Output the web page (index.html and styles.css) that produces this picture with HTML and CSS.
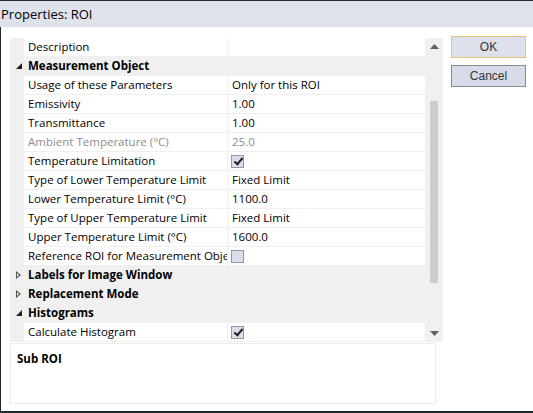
FILE: index.html
```html
<!DOCTYPE html>
<html>
<head>
<meta charset="utf-8">
<link rel="stylesheet" href="styles.css">
</head>
<body>
<div class="window">
  <div class="titlebar">Properties: ROI</div>
  <div class="content">
    <div class="main">
      <div class="grid">
        <div class="rows">
          <div class="row"><div class="gut"></div><div class="name">Description</div><div class="val"></div></div>
          <div class="row cat"><div class="gut"><span class="tri-open"></span></div><div class="cname">Measurement Object</div></div>
          <div class="row"><div class="gut"></div><div class="name">Usage of these Parameters</div><div class="val">Only for this ROI</div></div>
          <div class="row"><div class="gut"></div><div class="name">Emissivity</div><div class="val">1.00</div></div>
          <div class="row"><div class="gut"></div><div class="name">Transmittance</div><div class="val">1.00</div></div>
          <div class="row dis"><div class="gut"></div><div class="name">Ambient Temperature (°C)</div><div class="val">25.0</div></div>
          <div class="row"><div class="gut"></div><div class="name">Temperature Limitation</div><div class="val"><span class="chk on"></span></div></div>
          <div class="row"><div class="gut"></div><div class="name">Type of Lower Temperature Limit</div><div class="val">Fixed Limit</div></div>
          <div class="row"><div class="gut"></div><div class="name">Lower Temperature Limit (°C)</div><div class="val">1100.0</div></div>
          <div class="row"><div class="gut"></div><div class="name">Type of Upper Temperature Limit</div><div class="val">Fixed Limit</div></div>
          <div class="row"><div class="gut"></div><div class="name">Upper Temperature Limit (°C)</div><div class="val">1600.0</div></div>
          <div class="row"><div class="gut"></div><div class="name">Reference ROI for Measurement Object</div><div class="val"><span class="chk"></span></div></div>
          <div class="row cat"><div class="gut"><span class="tri-closed"></span></div><div class="cname">Labels for Image Window</div></div>
          <div class="row cat"><div class="gut"><span class="tri-closed"></span></div><div class="cname">Replacement Mode</div></div>
          <div class="row cat"><div class="gut"><span class="tri-open"></span></div><div class="cname">Histograms</div></div>
          <div class="row"><div class="gut"></div><div class="name">Calculate Histogram</div><div class="val"><span class="chk on"></span></div></div>
        </div>
        <div class="scroll">
          <svg class="arr" width="9" height="5" viewBox="0 0 9 5"><polygon points="0,5 4.5,0 9,5" fill="#606060"/></svg>
          <div class="track"><div class="thumb"></div></div>
          <svg class="arr" width="9" height="5" viewBox="0 0 9 5"><polygon points="0,0 4.5,5 9,0" fill="#606060"/></svg>
        </div>
      </div>
      <div class="desc"><div class="desc-title">Sub ROI</div></div>
    </div>
    <div class="buttons">
      <div class="btn default">OK</div>
      <div class="btn">Cancel</div>
    </div>
  </div>
</div>
</body>
</html>
```
FILE: styles.css
```css
* { box-sizing: border-box; }
html, body { margin: 0; padding: 0; background: #ffffff; }
body {
  font-family: "Open Sans", "Noto Sans", sans-serif;
  font-size: 11.5px;
  color: #000;
}
.window {
  width: 533px;
  height: 413px;
  border-top: 1px solid #1c2a2c;
  border-left: 1px solid #1c2a2c;
  border-bottom: 2px solid #1c2a2c;
  background: #fff;
  display: flex;
  flex-direction: column;
}
.titlebar {
  height: 26px;
  background: #dee2eb;
  padding-left: 1px;
  line-height: 26px;
  font-size: 13px;
  color: #000;
  margin-left: -1px;
}
.content {
  display: flex;
  padding: 11px 0 0 9px;
  flex: 1;
}
.main {
  width: 433px;
  display: flex;
  flex-direction: column;
}
.grid {
  display: flex;
  height: 304px;
}
.rows {
  width: 415px;
  display: flex;
  flex-direction: column;
}
.row {
  display: flex;
  height: 19px;
  line-height: 18px;
}
.gut {
  width: 14px;
  background: #f0f0f0;
  position: relative;
  flex-shrink: 0;
}
.name {
  width: 204px;
  padding-left: 4px;
  border-right: 1px solid #f0f0f0;
  border-bottom: 1px solid #f0f0f0;
  white-space: nowrap;
  overflow: hidden;
  flex-shrink: 0;
}
.val {
  flex: 1;
  padding-left: 4px;
  border-bottom: 1px solid #f0f0f0;
  white-space: nowrap;
  display: flex;
  align-items: center;
}
.dis { color: #8d8d8d; }
.cat { background: #f0f0f0; }
.cname {
  flex: 1;
  padding-left: 4px;
  font-weight: bold;
}
.tri-open {
  position: absolute;
  left: 6px;
  top: 6px;
  width: 0; height: 0;
  border-left: 6px solid transparent;
  border-bottom: 6px solid #1e1e1e;
}
.tri-closed {
  position: absolute;
  left: 6px;
  top: 5px;
  width: 6px; height: 8px;
}
.tri-closed::before {
  content: "";
  position: absolute;
  left: 0; top: 0;
  border-top: 4px solid transparent;
  border-bottom: 4px solid transparent;
  border-left: 5px solid #555;
}
.tri-closed::after {
  content: "";
  position: absolute;
  left: 1px; top: 2px;
  border-top: 2px solid transparent;
  border-bottom: 2px solid transparent;
  border-left: 2.5px solid #f0f0f0;
}
.chk {
  width: 13px;
  height: 13px;
  border: 1px solid #8f97a8;
  background: #dadeea;
  position: relative;
  display: inline-block;
  margin-left: -1px;
}
.chk.on::after {
  content: "";
  position: absolute;
  left: 3.5px;
  top: 0.5px;
  width: 3px;
  height: 7px;
  border-right: 2px solid #202020;
  border-bottom: 2px solid #202020;
  transform: rotate(40deg);
}
.scroll {
  width: 18px;
  background: #f0f0f0;
  display: flex;
  flex-direction: column;
  align-items: center;
}
.arr { margin: 6px 0; flex-shrink: 0; }
.track {
  flex: 1;
  width: 100%;
  display: flex;
  justify-content: center;
  padding-top: 46px;
}
.thumb {
  width: 8px;
  height: 182px;
  background: #cdcdcd;
}
.desc {
  margin-top: 1px;
  height: 61px;
  width: 426px;
  border: 1px solid #ececec;
  padding: 7px 0 0 6px;
}
.desc-title {
  font-weight: bold;
  font-size: 11.5px;
}
.buttons {
  display: flex;
  flex-direction: column;
  gap: 7px;
  margin-left: 8px;
  margin-top: -2px;
}
.btn {
  width: 75px;
  height: 22px;
  border: 1px solid #838a9a;
  background: #d8dce8;
  text-align: center;
  line-height: 20px;
  font-family: "Liberation Sans", sans-serif;
  font-size: 12px;
  color: #333;
}
.btn.default {
  border-color: #e6c46e;
  background: #dde1ec;
}
```
